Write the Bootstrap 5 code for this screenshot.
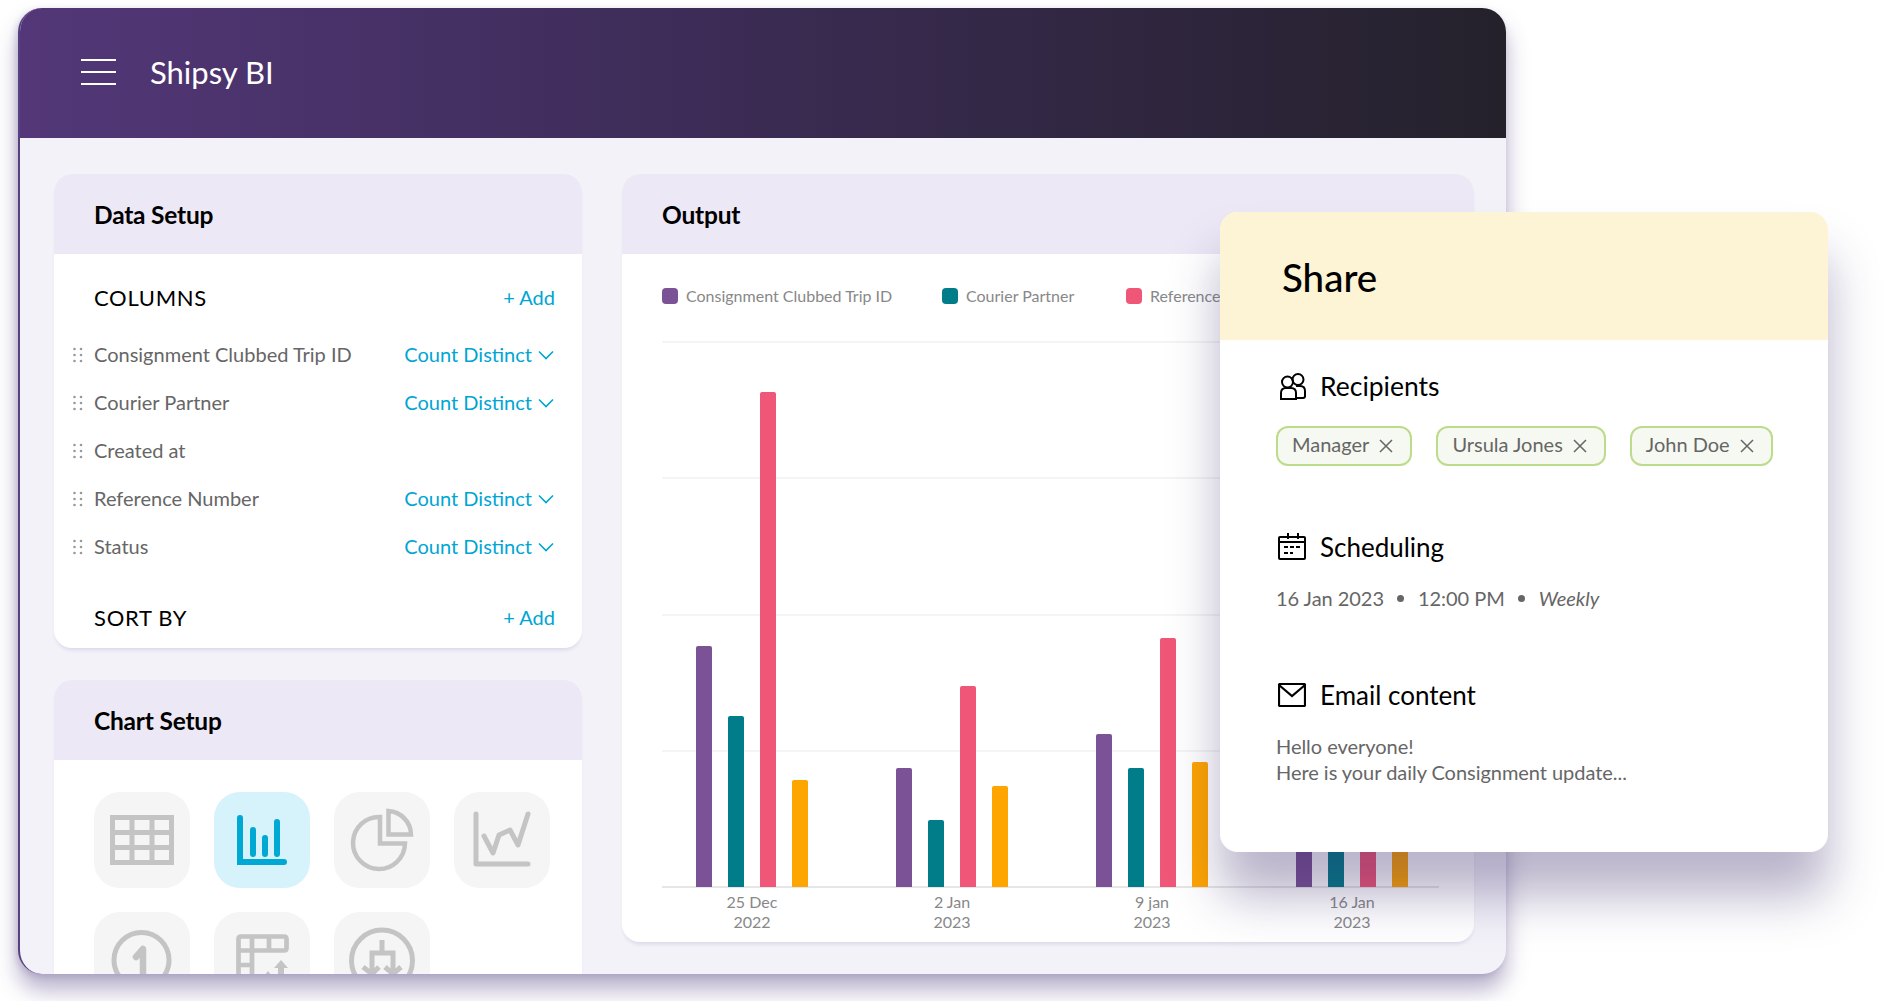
<!DOCTYPE html>
<html lang="en">
<head>
    <meta charset="UTF-8">
    <meta name="viewport" content="width=device-width, initial-scale=1.0">
    <title>Shipsy BI</title>
    <link href="https://cdn.jsdelivr.net/npm/bootstrap@5.3.0/dist/css/bootstrap.min.css" rel="stylesheet">
    <script src="https://cdn.jsdelivr.net/npm/bootstrap@5.3.0/dist/js/bootstrap.bundle.min.js"></script>
    <style>
        html, body { height: 100%; }
        body {
            background: #fff;
            margin: 0;
            overflow: hidden;
            font-family: Lato, "Liberation Sans", sans-serif;
            color: #000;
        }
        .stage { position: relative; height: 1001px; padding: 8px 0 0 18px; }
        .app-window {
            width: 1488px;
            height: 966px;
            background: #f3f2f9;
            border-radius: 24px;
            border-left: 2px solid #57407f;
            overflow: hidden;
            box-shadow: 0 16px 22px rgba(70, 50, 120, .38), -2px 2px 6px rgba(70, 50, 120, .18);
        }
        .app-bar {
            height: 130px;
            margin-left: -2px;
            padding: 0 0 2px 63px;
            background: linear-gradient(90deg, #533778 0%, #3f2d5b 40%, #24212b 100%);
            color: #fff;
            gap: 34px;
        }
        .burger { width: 35px; height: 26px; border-top: 2px solid #fff; border-bottom: 2px solid #fff; position: relative; }
        .burger::after { content: ""; position: absolute; left: 0; right: 0; top: 10px; height: 2px; background: #fff; }
        .app-title { font-size: 31px; }
        .app-main { padding: 36px 32px 0 34px; gap: 40px; height: 836px; }
        .left-col { width: 528px; gap: 32px; }
        .right-col { width: 852px; }
        .panel { background: #fff; border-radius: 18px; overflow: hidden; box-shadow: 0 4px 4px -2px rgba(70, 50, 120, .14); }
        .panel-head { height: 80px; background: #ece8f6; padding: 2px 0 0 40px; font-size: 24.5px; font-weight: 700; letter-spacing: -.2px; }
        .data-body { padding: 20px 27px 0 0; height: 394px; }
        .section-row { height: 48px; padding: 0 0 2px 40px; font-size: 22px; letter-spacing: .7px; }
        .add-link { color: #00a5d4; font-size: 20px; letter-spacing: 0; }
        .field-list { margin: 9px 0 23px; }
        .field-row { height: 48px; padding-bottom: 2px; font-size: 20px; color: #666; }
        .grip { width: 40px; flex: none; padding: 2px 0 0 19px; line-height: 0; }
        .count-link { color: #00a5d4; gap: 6px; }
        .count-link svg { margin: 2px 1px 0 0; }
        .chart-panel { height: 794px; }
        .tile-grid { display: grid; grid-template-columns: repeat(4, 96px); gap: 24px; padding: 32px 0 0 40px; }
        .tile { width: 96px; height: 96px; border-radius: 26px; background: #f5f5f5; }
        .tile-on { background: #d6f2fb; }
        .tile svg { display: block; }
        .output-panel { height: 768px; }
        .legend-row { height: 87px; padding: 0 0 3px 40px; font-size: 16px; color: #888; }
        .legend-item { gap: 8px; }
        .swatch { width: 16px; height: 16px; border-radius: 4px; }
        .legend-a { width: 280px; }
        .legend-b { width: 184px; }
        .plot { position: relative; height: 547px; margin: 0 35px 0 40px; }
        .grid-lines { position: absolute; inset: 0; }
        .grid-lines div { height: 2px; background: #f4f4f4; }
        .grid-lines div:last-child { background: #e6e6e6; }
        .bars { position: absolute; inset: 0 0 1px 34px; gap: 88px; }
        .bar-group { width: 112px; gap: 16px; }
        .bar { width: 16px; border-radius: 2px 2px 0 0; }
        .c1 { background: #7b5295; }
        .c2 { background: #007d88; }
        .c3 { background: #f05677; }
        .c4 { background: #ffa500; }
        .x-labels { padding: 4px 0 0 74px; gap: 88px; font-size: 16px; line-height: 20px; color: #888; }
        .x-labels div { width: 112px; text-align: center; }
        .share-card {
            position: absolute;
            left: 1220px;
            top: 212px;
            width: 608px;
            height: 640px;
            background: #fff;
            border-radius: 18px;
            overflow: hidden;
            box-shadow: 0 44px 50px rgba(50, 35, 100, .34);
        }
        .share-head { height: 128px; background: #fdf3d5; padding: 4px 0 0 62px; font-size: 38.5px; font-weight: 500; }
        .share-body { padding: 29px 0 0 56px; }
        .share-title { gap: 14px; font-size: 26.5px; height: 36px; margin-left: 2px; }
        .share-title svg { flex: none; }
        .chips { gap: 24px; margin-top: 21px; }
        .chip {
            height: 40px;
            border: 2px solid #bcdc8c;
            border-radius: 12px;
            background: #f6f9f1;
            padding: 0 17px 5px 14px;
            font-size: 20px;
            color: #666;
            gap: 10px;
        }
        .chip svg { margin-top: 5px; }
        .muted-line { color: #666; font-size: 20px; line-height: 26px; letter-spacing: -.04px; }
        .sched-line { gap: 11px; margin-top: 20px; }
        .dot { width: 7px; height: 7px; border-radius: 50%; background: #666; margin: 0 2.5px; }
        .title-sched { margin-top: 63px; font-size: 26px; }
        .title-mail { margin-top: 66px; font-size: 26px; }
        .mail-text { margin-top: 20px; }
    </style>
</head>
<body>
<div class="stage">
    <div class="app-window">
        <div class="app-bar d-flex align-items-center">
            <div class="burger"></div>
            <div class="app-title">Shipsy BI</div>
        </div>
        <div class="app-main d-flex">
            <div class="left-col d-flex flex-column flex-shrink-0">
                <div class="panel flex-shrink-0">
                    <div class="panel-head d-flex align-items-center">Data Setup</div>
                    <div class="data-body">
                        <div class="section-row d-flex align-items-center justify-content-between">
                            <span>COLUMNS</span><span class="add-link">+ Add</span>
                        </div>
                        <div class="field-list">
                            <div class="field-row d-flex align-items-center"><span class="grip"><svg width="10" height="16" fill="#999"><circle cx="1.500" cy="2" r="1.300"/><circle cx="8" cy="2" r="1.300"/><circle cx="1.500" cy="8" r="1.300"/><circle cx="8" cy="8" r="1.300"/><circle cx="1.500" cy="14" r="1.300"/><circle cx="8" cy="14" r="1.300"/></svg></span><span class="flex-grow-1">Consignment Clubbed Trip ID</span><span class="count-link d-flex align-items-center">Count Distinct <svg width="16" height="10" fill="none" stroke="#00a5d4" stroke-width="1.600"><path d="M1 1.500 8 8.500 15 1.500"/></svg></span></div>
                            <div class="field-row d-flex align-items-center"><span class="grip"><svg width="10" height="16" fill="#999"><circle cx="1.500" cy="2" r="1.300"/><circle cx="8" cy="2" r="1.300"/><circle cx="1.500" cy="8" r="1.300"/><circle cx="8" cy="8" r="1.300"/><circle cx="1.500" cy="14" r="1.300"/><circle cx="8" cy="14" r="1.300"/></svg></span><span class="flex-grow-1">Courier Partner</span><span class="count-link d-flex align-items-center">Count Distinct <svg width="16" height="10" fill="none" stroke="#00a5d4" stroke-width="1.600"><path d="M1 1.500 8 8.500 15 1.500"/></svg></span></div>
                            <div class="field-row d-flex align-items-center"><span class="grip"><svg width="10" height="16" fill="#999"><circle cx="1.500" cy="2" r="1.300"/><circle cx="8" cy="2" r="1.300"/><circle cx="1.500" cy="8" r="1.300"/><circle cx="8" cy="8" r="1.300"/><circle cx="1.500" cy="14" r="1.300"/><circle cx="8" cy="14" r="1.300"/></svg></span><span class="flex-grow-1">Created at</span></div>
                            <div class="field-row d-flex align-items-center"><span class="grip"><svg width="10" height="16" fill="#999"><circle cx="1.500" cy="2" r="1.300"/><circle cx="8" cy="2" r="1.300"/><circle cx="1.500" cy="8" r="1.300"/><circle cx="8" cy="8" r="1.300"/><circle cx="1.500" cy="14" r="1.300"/><circle cx="8" cy="14" r="1.300"/></svg></span><span class="flex-grow-1">Reference Number</span><span class="count-link d-flex align-items-center">Count Distinct <svg width="16" height="10" fill="none" stroke="#00a5d4" stroke-width="1.600"><path d="M1 1.500 8 8.500 15 1.500"/></svg></span></div>
                            <div class="field-row d-flex align-items-center"><span class="grip"><svg width="10" height="16" fill="#999"><circle cx="1.500" cy="2" r="1.300"/><circle cx="8" cy="2" r="1.300"/><circle cx="1.500" cy="8" r="1.300"/><circle cx="8" cy="8" r="1.300"/><circle cx="1.500" cy="14" r="1.300"/><circle cx="8" cy="14" r="1.300"/></svg></span><span class="flex-grow-1">Status</span><span class="count-link d-flex align-items-center">Count Distinct <svg width="16" height="10" fill="none" stroke="#00a5d4" stroke-width="1.600"><path d="M1 1.500 8 8.500 15 1.500"/></svg></span></div>
                        </div>
                        <div class="section-row d-flex align-items-center justify-content-between">
                            <span>SORT BY</span><span class="add-link">+ Add</span>
                        </div>
                    </div>
                </div>
                <div class="panel chart-panel flex-shrink-0">
                    <div class="panel-head d-flex align-items-center">Chart Setup</div>
                    <div class="tile-grid">
                        <div class="tile"><svg width="96" height="96" fill="none" stroke="#c4c4c4" stroke-width="5"><rect x="18.500" y="25.500" width="59" height="45"/><path d="M18 40.500H78M18 55.500H78M38 25V71M58 25V71"/></svg></div>
                        <div class="tile tile-on"><svg width="96" height="96" fill="none" stroke="#00a8d4" stroke-width="6" stroke-linecap="round"><path d="M26 26V70H70" /><path d="M39 38V62M51 46V62M63 30V62"/></svg></div>
                        <div class="tile"><svg width="96" height="96" fill="none" stroke="#c4c4c4" stroke-width="4.500"><path d="M46 25V51.500H71A26 26 0 1 1 46 25Z"/><path d="M54.500 19V42.500H77A24 24 0 0 0 54.500 19Z"/></svg></div>
                        <div class="tile"><svg width="96" height="96" fill="none" stroke="#c4c4c4" stroke-width="5" stroke-linecap="round" stroke-linejoin="round"><path d="M22 22V72H74"/><path d="M30 44 39 61 45 43 56 38 64 53 74 22"/></svg></div>
                        <div class="tile"><svg width="96" height="96" fill="none" stroke="#c4c4c4" stroke-width="5" stroke-linecap="round" stroke-linejoin="round"><circle cx="47.500" cy="48" r="27.500"/><path stroke-width="6.500" d="M42 45 49 37V70"/></svg></div>
                        <div class="tile"><svg width="96" height="96" fill="none" stroke="#c4c4c4" stroke-width="4.700" stroke-linejoin="round"><path d="M24.500 72V27Q24.500 24.500 27 24.500H70Q72.500 24.500 72.500 27V36Q72.500 38.500 70 38.500H24.500M24.500 53H38M38 24V72M55 24V38"/><path fill="#c4c4c4" stroke="none" d="M67 48 74 56H70V72H64V56H60ZM54 59 58 64H50Z"/></svg></div>
                        <div class="tile"><svg width="96" height="96" fill="none" stroke="#c4c4c4" stroke-width="5"><circle cx="48" cy="48.500" r="30.500"/><path d="M48 28V41M38 60V41H59V60M29 55 38 62 45 55M51 55 59 62 67 55"/></svg></div>
                    </div>
                </div>
            </div>
            <div class="right-col flex-shrink-0">
                <div class="panel output-panel">
                    <div class="panel-head d-flex align-items-center">Output</div>
                    <div class="legend-row d-flex align-items-center">
                        <div class="legend-item legend-a d-flex align-items-center"><span class="swatch c1"></span>Consignment Clubbed Trip ID</div>
                        <div class="legend-item legend-b d-flex align-items-center"><span class="swatch c2"></span>Courier Partner</div>
                        <div class="legend-item d-flex align-items-center"><span class="swatch c3"></span>Reference Number</div>
                    </div>
                    <div class="plot">
                        <div class="grid-lines d-flex flex-column justify-content-between">
                            <div></div><div></div><div></div><div></div><div></div>
                        </div>
                        <div class="bars d-flex align-items-end">
                            <div class="bar-group d-flex align-items-end">
                                <div class="bar c1" style="height:241px"></div><div class="bar c2" style="height:171px"></div><div class="bar c3" style="height:495px"></div><div class="bar c4" style="height:107px"></div>
                            </div>
                            <div class="bar-group d-flex align-items-end">
                                <div class="bar c1" style="height:119px"></div><div class="bar c2" style="height:67px"></div><div class="bar c3" style="height:201px"></div><div class="bar c4" style="height:101px"></div>
                            </div>
                            <div class="bar-group d-flex align-items-end">
                                <div class="bar c1" style="height:153px"></div><div class="bar c2" style="height:119px"></div><div class="bar c3" style="height:249px"></div><div class="bar c4" style="height:125px"></div>
                            </div>
                            <div class="bar-group d-flex align-items-end">
                                <div class="bar c1" style="height:120px"></div><div class="bar c2" style="height:90px"></div><div class="bar c3" style="height:150px"></div><div class="bar c4" style="height:100px"></div>
                            </div>
                        </div>
                    </div>
                    <div class="x-labels d-flex">
                        <div>25 Dec<br>2022</div><div>2 Jan<br>2023</div><div>9 jan<br>2023</div><div>16 Jan<br>2023</div>
                    </div>
                </div>
            </div>
        </div>
    </div>
    <div class="share-card">
        <div class="share-head d-flex align-items-center">Share</div>
        <div class="share-body">
            <div class="share-title d-flex align-items-center">
                <svg width="28" height="30" fill="none" stroke="#000" stroke-width="2"><circle cx="9.500" cy="10" r="5.500"/><circle cx="20" cy="7.500" r="5.500"/><path d="M3 27V21Q3 16 8 16H13Q18 16 18 21V27ZM18 14H22Q27 14 27 19V24Q27 26 25 26H18"/></svg>
                <span>Recipients</span>
            </div>
            <div class="chips d-flex">
                <div class="chip d-flex align-items-center">Manager <svg width="14" height="14" stroke="#666" stroke-width="1.500"><path d="M1 1 13 13M13 1 1 13"/></svg></div>
                <div class="chip d-flex align-items-center">Ursula Jones <svg width="14" height="14" stroke="#666" stroke-width="1.500"><path d="M1 1 13 13M13 1 1 13"/></svg></div>
                <div class="chip d-flex align-items-center">John Doe <svg width="14" height="14" stroke="#666" stroke-width="1.500"><path d="M1 1 13 13M13 1 1 13"/></svg></div>
            </div>
            <div class="share-title title-sched d-flex align-items-center">
                <svg width="28" height="28" fill="none" stroke="#000" stroke-width="2"><rect x="1" y="4" width="26" height="22" rx="1"/><path d="M1 9H27M10 0V6M20 0V6"/><path stroke-dasharray="4 2" d="M6 14H22M6 20H15"/></svg>
                <span>Scheduling</span>
            </div>
            <div class="muted-line sched-line d-flex align-items-center"><span>16 Jan 2023</span><span class="dot"></span><span>12:00 PM</span><span class="dot"></span><em>Weekly</em></div>
            <div class="share-title title-mail d-flex align-items-center">
                <svg width="28" height="24" fill="none" stroke="#000" stroke-width="2.200"><rect x="1" y="1" width="26" height="22" rx="1"/><path d="M1 2 14 13 27 2"/></svg>
                <span>Email content</span>
            </div>
            <div class="muted-line mail-text">Hello everyone!<br>Here is your daily Consignment update...</div>
        </div>
    </div>
</div>
</body>
</html>
